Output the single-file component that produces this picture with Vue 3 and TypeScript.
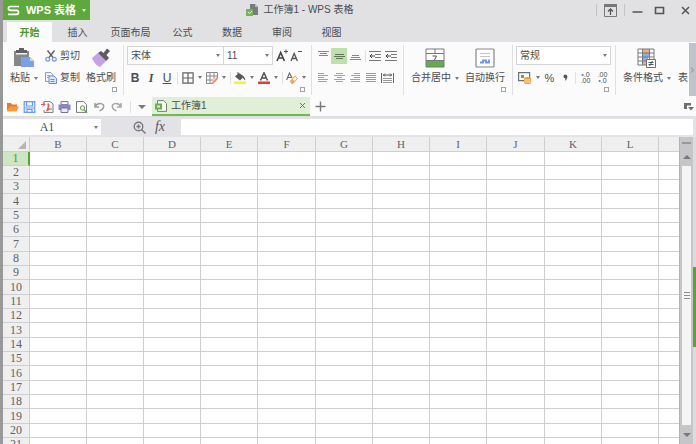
<script setup lang="ts">
import { ref } from 'vue'

const menus: string[] = ['开始', '插入', '页面布局', '公式', '数据', '审阅', '视图']
const activeMenu = ref('开始')
const columns: string[] = ['B', 'C', 'D', 'E', 'F', 'G', 'H', 'I', 'J', 'K', 'L', '']
const rows: number[] = Array.from({ length: 21 }, (_, i) => i + 1)
const activeRow = ref(1)
const cellName = ref('A1')
const formula = ref('')
</script>

<template>
  <div class="app">
    <header class="titlebar">
      <button class="brand" type="button">
        <svg width="13" height="11" viewBox="0 0 13 11"><path d="M12 1.5H3.6C.7 1.5.7 5.3 3.6 5.3H9.4C12.3 5.3 12.3 9.4 9.4 9.4H1" fill="none" stroke="#fff" stroke-width="1.7" /></svg>
        <span>WPS 表格</span>
        <i class="caret light"></i>
      </button>
      <h1 class="title">
        <svg width="12" height="12" viewBox="0 0 12 12"><path d="M4 0h5l3 3v8H4z" fill="#777b80" /><path d="M9 0v3h3" fill="#b8bcc0" /><path d="M0 5h7v7H0z" fill="#73b65a" /><path d="M2 8l1.5 1.7L6 7" fill="none" stroke="#e8f5e0" /></svg>
        <span>工作簿1 - WPS 表格</span>
      </h1>
      <div class="controls">
        <i class="bar"></i>
        <button type="button" aria-label="功能区"><svg width="13" height="13" viewBox="0 0 13 13"><path d="M.5.5h12v12H.5z" fill="none" stroke="#777" /><path d="M0 0h13v3H0z" fill="#777" /><path d="M6.5 11V5M4 7.5L6.5 5 9 7.5" fill="none" stroke="#555" stroke-width="1.3" /></svg></button>
        <i class="bar"></i>
        <button type="button" aria-label="最小化"><svg width="11" height="11" viewBox="0 0 11 11"><path d="M.5 7h10" stroke="#555" stroke-width="1.5" /></svg></button>
        <button type="button" aria-label="最大化"><svg width="11" height="11" viewBox="0 0 11 11"><path d="M1.5 2.5h8v6h-8z" fill="none" stroke="#555" stroke-width="1.6" /></svg></button>
        <button type="button" aria-label="关闭"><svg width="11" height="11" viewBox="0 0 11 11"><path d="M2 2l7 7M9 2L2 9" stroke="#555" stroke-width="1.5" /></svg></button>
      </div>
    </header>

    <nav class="menus">
      <button v-for="m in menus" :key="m" type="button" :class="{ active: m === activeMenu }" @click="activeMenu = m">{{ m }}</button>
    </nav>

    <section class="ribbon">
      <div class="group clipboard">
        <button class="big" type="button">
          <svg width="20" height="20" viewBox="0 0 20 20"><path d="M0 3h15v15H0z" fill="#85878a" /><path d="M5 0h5v2h3v3H2V2h3z" fill="#5e6063" /><path d="M2 5h11v1.500H2z" fill="#f2f2f2" /><path d="M7 9h9l4 4v6H7z" fill="#7ba0e4" /><path d="M16 9v4h4" fill="#c3d6f8" /></svg>
          <span>粘贴<i class="caret"></i></span>
        </button>
        <div class="pair">
          <button type="button">
            <svg width="12" height="12" viewBox="0 0 12 12"><path d="M2.5.5L8.4 8M9.5.5L3.6 8" stroke="#606468" stroke-width="1.4" /><g fill="none" stroke="#7098dc" stroke-width="1.2"><circle cx="2.7" cy="9.3" r="1.9" /><circle cx="9.3" cy="9.3" r="1.9" /></g></svg>剪切
          </button>
          <button type="button">
            <svg width="12" height="12" viewBox="0 0 12 12"><path d="M.6.6h5.2l2 2v6.8H.6z" fill="#fff" stroke="#7d96bd" /><path d="M2 3.5h3M2 5.5h3" stroke="#8ea6cc" /><path d="M4 4h5l2.5 2.5v5H4z" fill="#dce8fc" stroke="#668fd8" /><path d="M5.5 7.5h4M5.5 9.5h4" stroke="#668fd8" /></svg>复制
          </button>
        </div>
        <button class="big" type="button">
          <svg width="20" height="20" viewBox="0 0 20 20"><path d="M1 10l6-5 8 8-6 6c-3-1-6-4-8-9z" fill="#c4a2e8" /><path d="M7 5l3-2 2.500 2L16 .5 19 3l-3.500 4L18 10l-3 3z" fill="#5d5d61" /></svg>
          <span>格式刷</span>
        </button>
        <i class="launcher"></i>
      </div>

      <div class="group font">
        <div class="line selects">
          <label class="pick"><select aria-label="字体"><option>宋体</option></select><i class="caret"></i></label>
          <label class="pick"><select aria-label="字号"><option>11</option></select><i class="caret"></i></label>
          <button type="button" aria-label="增大字号"><svg width="12" height="14" viewBox="0 0 12 14"><path d="M1 12L4.700 3.500 8.400 12M2.400 9h4.600" fill="none" stroke="#444" stroke-width="1.6" /><path d="M8 2.500h4M10 .5v4" stroke="#555" /></svg></button>
          <button type="button" aria-label="减小字号"><svg width="12" height="14" viewBox="0 0 12 14"><path d="M1 12L4.200 4.500 7.400 12M2.300 9.500h3.800" fill="none" stroke="#555" stroke-width="1.3" /><path d="M8 2.500h4" stroke="#555" /></svg></button>
        </div>
        <div class="line tools">
          <button type="button" class="glyph bold">B</button>
          <button type="button" class="glyph italic">I</button>
          <button type="button" class="glyph under">U</button>
          <i class="rule"></i>
          <button type="button" class="split" aria-label="边框"><svg width="12" height="12" viewBox="0 0 12 12"><path d="M.9.9h10.200v10.200H.9zM6 1v10M1 6h10" fill="none" stroke="#606366" stroke-width="1.200" /></svg><i class="caret"></i></button>
          <button type="button" class="split" aria-label="绘图边框"><svg width="12" height="12" viewBox="0 0 12 12"><path d="M.5.5h11M.5.5v11h6M4 .5v11M8 .5V7M.5 4h11M.5 8h7M11.500.5V6" fill="none" stroke="#8a8a8e" /><path d="M5 11.500L11 5l1 2-5 5z" fill="#ed8c66" /></svg><i class="caret"></i></button>
          <i class="rule"></i>
          <button type="button" class="split" aria-label="填充颜色"><svg width="12" height="12" viewBox="0 0 12 12"><path d="M1 4.500L5 1l5 3.500L6 8.500z" fill="#55595c" /><path d="M9 4.500c2 1 2.500 2 2 4L9 6z" fill="#55595c" /><path d="M4 0v4" stroke="#55595c" /><path d="M0 9.500h12V12H0z" fill="#fbf12b" /></svg><i class="caret"></i></button>
          <button type="button" class="split" aria-label="字体颜色"><svg width="12" height="12" viewBox="0 0 12 12"><path d="M2.500 8.500L6 .8l3.500 7.700M3.700 6h4.600" fill="none" stroke="#505458" stroke-width="1.500" /><path d="M0 9.500h12V12H0z" fill="#e23c3c" /></svg><i class="caret"></i></button>
          <i class="rule"></i>
          <button type="button" class="split" aria-label="清除"><svg width="12" height="12" viewBox="0 0 12 12"><path d="M.6 8L3.500 1l2.600 5M1.500 5.500h3.500" fill="none" stroke="#6b6f73" stroke-width="1.200" /><path d="M4.500 9L9 4l2.500 2.500L7 11.300H5.500z" fill="#fff1dd" stroke="#e9a357" /><path d="M4.500 9l2-2 2.500 2.500-2 2H5.500z" fill="#eda95e" /></svg><i class="caret"></i></button>
        </div>
        <i class="launcher"></i>
      </div>

      <div class="group align">
        <div class="line">
          <button type="button" aria-label="顶端对齐"><svg width="11" height="12" viewBox="0 0 11 12"><path d="M0 1.500h11M2 3.500h7M1 5.500h9" stroke="#85878a" /></svg></button>
          <button type="button" class="on" aria-label="垂直居中"><svg width="11" height="12" viewBox="0 0 11 12"><path d="M1 4.500h9M0 6.500h11M2 8.500h7" stroke="#5f7659" /></svg></button>
          <button type="button" aria-label="底端对齐"><svg width="11" height="12" viewBox="0 0 11 12"><path d="M2 5.500h7M1 7.500h9M0 9.500h11" stroke="#85878a" /></svg></button>
          <i class="rule"></i>
          <button type="button" aria-label="减少缩进"><svg width="12" height="12" viewBox="0 0 12 12"><path d="M0 1.500h12M6 4.500h6M6 7.500h6M0 10.500h12" stroke="#777a7d" /><path d="M1 6h5M3 4L1 6l2 2" fill="none" stroke="#444" /></svg></button>
          <button type="button" aria-label="增加缩进"><svg width="12" height="12" viewBox="0 0 12 12"><path d="M0 1.500h12M6 4.500h6M6 7.500h6M0 10.500h12" stroke="#777a7d" /><path d="M1 6h5M3 4L1 6l2 2" fill="none" stroke="#444" /></svg></button>
        </div>
        <div class="line">
          <button type="button" aria-label="左对齐"><svg width="11" height="12" viewBox="0 0 11 12"><path d="M0 1.500h6M0 3.500h10M0 5.500h6M0 7.500h10M0 9.500h9" stroke="#a0a2a5" /></svg></button>
          <button type="button" aria-label="水平居中"><svg width="11" height="12" viewBox="0 0 11 12"><path d="M2 1.500h7M0 3.500h11M3 5.500h5M0 7.500h11M2 9.500h7" stroke="#a0a2a5" /></svg></button>
          <button type="button" aria-label="右对齐"><svg width="11" height="12" viewBox="0 0 11 12"><path d="M4 1.500h6M1 3.500h9M4 5.500h6M0 7.500h10M1 9.500h9" stroke="#a0a2a5" /></svg></button>
          <button type="button" aria-label="两端对齐"><svg width="11" height="12" viewBox="0 0 11 12"><path d="M0 1.500h10M0 3.500h10M0 5.500h10M0 7.500h10M0 9.500h10" stroke="#98999c" /></svg></button>
          <button type="button" aria-label="分散对齐"><svg width="13" height="12" viewBox="0 0 13 12"><path d="M.5 1v10M12.500 1v10" stroke="#666" /><path d="M2 6.500h9M2 8.500h9M2 10.500h9" stroke="#999" /><path d="M2 3h9M4 1.500L2.500 3 4 4.500M9 1.500L10.500 3 9 4.500" fill="none" stroke="#555" /></svg></button>
        </div>
      </div>

      <div class="group merge">
        <button class="big" type="button">
          <svg width="20" height="20" viewBox="0 0 20 20"><path d="M1 1h18v12H1z" fill="#fff" /><path d="M1 12.500h18V19H1z" fill="#62ad48" /><path d="M1 1h18v18H1zM1 5.500h18M10 1v5M1 12.500h18" fill="none" stroke="#77797c" /><path d="M7.500 8h4l-2 4" fill="none" stroke="#555" /></svg>
          <span>合并居中<i class="caret"></i></span>
        </button>
        <button class="big" type="button">
          <svg width="20" height="20" viewBox="0 0 20 20"><rect x="1" y="1" width="18" height="18" rx="1" fill="#fdfdfd" stroke="#85878a" stroke-width="1.200" /><path d="M5 5.500h10M5 8.500h10" stroke="#c3c5c8" /><path d="M5 14.500h3v-2h3v2h3v-3" fill="none" stroke="#6795e6" stroke-width="1.800" /></svg>
          <span>自动换行</span>
        </button>
        <i class="launcher"></i>
      </div>

      <div class="group number">
        <div class="line">
          <label class="pick"><select aria-label="数字格式"><option>常规</option></select><i class="caret"></i></label>
        </div>
        <div class="line tools">
          <button type="button" class="split" aria-label="货币"><svg width="14" height="12" viewBox="0 0 14 12"><path d="M.6.6h11v8H.6z" fill="#fff" stroke="#6d7073" stroke-width="1.200" /><path d="M3 3h3v3H3z" fill="#888" /><path d="M6 6.500c0-2 7-2 7 0v4c0 2-7 2-7 0z" fill="#efa041" /><path d="M6.500 8h6M6.500 10h6" stroke="#fbe0b5" /></svg><i class="caret"></i></button>
          <button type="button" class="percent">%</button>
          <button type="button" class="percent comma" aria-label="千位分隔"><svg width="5" height="8" viewBox="0 0 5 8"><circle cx="2.400" cy="2.400" r="1.900" fill="#55585b" /><path d="M4.200 2c.3 2-.6 4-2.400 5 .5-1 .7-2 .6-3z" fill="#55585b" /></svg></button>
          <i class="rule"></i>
          <button type="button" class="decimal"><span><b>•</b>.0</span><span>.00</span></button>
          <button type="button" class="decimal"><span>.00</span><span><b>•</b>.0</span></button>
        </div>
        <i class="launcher"></i>
      </div>

      <div class="group styles">
        <button class="big" type="button">
          <svg width="20" height="20" viewBox="0 0 20 20"><path d="M1 1h16v16H1z" fill="#fff" /><path d="M6 1h6v4H6zM6 13h5v4H6z" fill="#f0ad78" /><path d="M5 5h8v4H5zM6 9h5v4H6z" fill="#8cacf0" /><path d="M1 1h16v16H1zM5.500 1v16M12.500 1v16M1 5h16M1 9h16M1 13h16" fill="none" stroke="#77797c" /><path d="M9.500 11.500h9v8h-9z" fill="#fff" stroke="#6d6f72" /><path d="M11.500 14.500h5M11.500 16.500h5M15.500 13l-3 5" stroke="#555" /></svg>
          <span>条件格式<i class="caret"></i></span>
        </button>
        <button class="cut" type="button">表</button>
      </div>
      <button class="more" type="button" aria-label="更多"><svg width="5" height="6" viewBox="0 0 5 6"><path d="M1 .5L3.500 3 1 5.500" fill="none" stroke="#858a91" /></svg></button>
    </section>

    <div class="quick">
      <div class="actions">
        <button type="button" aria-label="打开"><svg width="13" height="12" viewBox="0 0 13 12"><path d="M1 10V2h4l1 1.500h5V6H4z" fill="#e87b20" /><path d="M3.500 5.500H13L10.500 10.500H1z" fill="#f79a3e" /></svg></button>
        <button type="button" aria-label="保存"><svg width="13" height="12" viewBox="0 0 13 12"><path d="M1.200.7h10.600v10.600H1.200z" fill="#eef4ff" stroke="#6a9be8" stroke-width="1.200" /><path d="M3.500 1v4h6V1M1.500 7h10M4 11V8.500h5V11" fill="none" stroke="#6a9be8" stroke-width="1.200" /></svg></button>
        <button type="button" aria-label="输出PDF"><svg width="13" height="12" viewBox="0 0 13 12"><path d="M3 3V.6h6L12 3v8.400H3V9" fill="#fff" stroke="#77797c" /><path d="M5.500 10c1-2 2-5 1.500-6.500s2 0 .5 2.500 2 2 3 2-2-.5-5 2" fill="none" stroke="#dc5b59" stroke-width="1.100" /><path d="M0 3.500h4M2 1.500l2 2-2 2" fill="none" stroke="#dc5b59" /></svg></button>
        <button type="button" aria-label="打印"><svg width="13" height="12" viewBox="0 0 13 12"><path d="M3 .6h7v3H3z" fill="#fff" stroke="#77748c" /><path d="M.5 3.500h12v5.500H.5z" fill="#8886c8" /><path d="M3 7h7v4.500H3z" fill="#e8e6fa" stroke="#77748c" /></svg></button>
        <button type="button" aria-label="打印预览"><svg width="13" height="12" viewBox="0 0 13 12"><path d="M1.500.6h7l3 3v7.800h-10z" fill="#fff" stroke="#77797c" /><circle cx="7.500" cy="7" r="2.200" fill="#e5f2df" stroke="#66a052" /><path d="M9 8.800l3 3" stroke="#66a052" stroke-width="1.400" /></svg></button>
        <button type="button" aria-label="撤销"><svg width="13" height="12" viewBox="0 0 13 12"><path d="M2 5.500C5 1 12 2 10.500 6.500 10 8.500 8 9 6.500 10M2 2v4h4" fill="none" stroke="#9b9da0" stroke-width="1.500" /></svg></button>
        <button type="button" aria-label="恢复"><svg width="13" height="12" viewBox="0 0 13 12"><path d="M11 5.500C8 1 1 2 2.500 6.500 3 8.500 5 9 6.500 10M11 2v4H7" fill="none" stroke="#a4a6a9" stroke-width="1.500" /></svg></button>
      </div>
      <button class="custom" type="button" aria-label="自定义"><i class="caret wide"></i></button>
      <div class="doc">
        <svg width="12" height="12" viewBox="0 0 12 12"><path d="M2.500.6h6l3 3v7.800h-9z" fill="#f5faf2" stroke="#73806e" /><path d="M0 3.500h7v6H0z" fill="#67b04c" /><path d="M2 5.500h3v2H2z" fill="#d9efcf" /></svg>
        <span>工作簿1</span>
        <button type="button" aria-label="关闭标签"><svg width="7" height="7" viewBox="0 0 7 7"><path d="M1 1l5 5M6 1L1 6" stroke="#6c756a" /></svg></button>
      </div>
      <button class="plus" type="button" aria-label="新建"><svg width="11" height="11" viewBox="0 0 11 11"><path d="M5.500.5v10M.5 5.500h10" stroke="#77797c" stroke-width="1.400" /></svg></button>
      <button class="layout" type="button" aria-label="标签列表"><svg width="10" height="9" viewBox="0 0 10 9"><path d="M0 1h7v2.500H3V7H0z" fill="#6c6e71" /><path d="M4 5h6L7 8.500z" fill="#6c6e71" /></svg></button>
    </div>

    <div class="formula">
      <label class="name"><input v-model="cellName" aria-label="名称框" /><i class="caret"></i></label>
      <button type="button" aria-label="浏览公式结果"><svg width="13" height="13" viewBox="0 0 13 13"><circle cx="5.500" cy="5.500" r="4.300" fill="none" stroke="#77797c" stroke-width="1.400" /><path d="M3.500 5.500h4M5.500 3.500v4M8.500 8.500l4 4" stroke="#77797c" stroke-width="1.500" /></svg></button>
      <button type="button" class="fx">fx</button>
      <input v-model="formula" class="entry" aria-label="编辑栏" />
    </div>

    <main class="body">
      <div class="sheet">
        <table>
          <colgroup><col class="head" /><col v-for="(c, i) in columns" :key="i" :class="c ? 'cell' : 'rest'" /></colgroup>
          <thead>
            <tr>
              <th class="corner"><svg width="8" height="8" viewBox="0 0 8 8"><path d="M8 0v8H0z" fill="#b6b6b8" /></svg></th>
              <th v-for="(c, i) in columns" :key="i" scope="col">{{ c }}</th>
            </tr>
          </thead>
          <tbody>
            <tr v-for="r in rows" :key="r" @click="activeRow = r">
              <th scope="row" :class="{ current: r === activeRow }">{{ r }}</th>
              <td v-for="(c, i) in columns" :key="i"></td>
            </tr>
          </tbody>
        </table>
      </div>
      <div class="scroll">
        <i class="handle"></i>
        <button type="button" aria-label="向上"><i class="caret wide up"></i></button>
        <div class="thumb"><i></i><i></i><i></i></div>
        <button type="button" aria-label="向下"><i class="caret wide"></i></button>
      </div>
      <div class="side"></div>
    </main>
    <button class="panel" type="button" aria-label="任务窗格"></button>
  </div>
</template>

<style>
html, body, #app { height: 100%; }
body { margin: 0; overflow: hidden; }
</style>

<style scoped>
* { box-sizing: border-box; }
.app {
  position: relative; display: flex; flex-direction: column; height: 100%; overflow: hidden;
  border-left: 3px solid #989898; background: #e1e1e3; color: #4b4d50;
  font: 10px/14px "Liberation Sans", "Noto Sans CJK SC", sans-serif;
}
button, input, select { font: inherit; color: inherit; border: 0; padding: 0; margin: 0; background: none; }
button { display: flex; align-items: center; justify-content: center; white-space: nowrap; }
svg { display: block; flex: none; }
.caret { flex: none; border: 2px solid transparent; border-top: 3px solid #77797c; border-bottom: 0; width: 0; height: 0; }
.caret.light { border-top-color: #e6f5dd; }
.caret.wide { border-width: 4px 4px 0; }
.caret.up { border-top: 0; border-bottom: 4px solid #77797c; }

.titlebar { display: flex; height: 20px; flex: none; }
.brand { width: 87px; background: #5ea83c; color: #fff; font-weight: bold; font-size: 11px; line-height: 18px; justify-content: space-between; padding: 0 4px; }
.title { flex: 1; display: flex; align-items: center; justify-content: center; gap: 5px; margin: 0; padding-right: 86px; font-size: 10px; font-weight: normal; line-height: 18px; }
.controls { display: flex; align-items: center; gap: 7px; padding-right: 5px; }
.controls .bar { width: 1px; height: 12px; background: #c4c4c7; }
.controls button { height: 18px; }
.controls button:nth-of-type(n + 3) { margin-left: 4px; }
.controls button:last-child { margin-left: 8px; }

.menus { display: grid; grid-template-columns: 45px 51px 55px 49px 50px 50px 49px; height: 22px; padding: 2px 4px 0; flex: none; }
.menus button { padding-top: 2px; }
.menus .active { background: #fbfbfb; color: #4c9a2c; font-weight: bold; }

.ribbon { display: flex; height: 55px; flex: none; background: #fbfbfb; padding-top: 3px; overflow: hidden; }
.group { position: relative; flex: none; height: 50px; border-right: 1px solid #e0e0e2; }
.launcher { position: absolute; right: 6px; bottom: 3px; width: 5px; height: 5px; border: 1px solid #a3a5a8; }
.line { display: flex; align-items: center; height: 21px; }
.big { flex-direction: column; justify-content: flex-start; gap: 3px; height: 42px; padding-top: 3px; }
.big span { display: flex; align-items: center; gap: 4px; }

.clipboard { display: grid; grid-template-columns: 28px 34px 30px; gap: 7px; width: 121px; padding-left: 7px; }
.pair button { height: 21px; gap: 3px; }
.pair button + button { margin-top: 1px; }

.font { width: 188px; padding-left: 3px; }
.pick { position: relative; display: flex; align-items: center; height: 19px; border: 1px solid #d5d5d8; background: #fff; }
.pick select { appearance: none; width: 100%; height: 17px; padding-left: 3px; outline: 0; }
.pick .caret { position: absolute; right: 3px; pointer-events: none; }
.pick + .pick { border-left: 0; }
.selects { display: grid; grid-template-columns: 97px 49px 12px 12px; column-gap: 0; }
.selects button { margin-left: 5px; }
.selects button:last-child { margin-left: 9px; }
.font .tools { display: grid; grid-template-columns: 16px 16px 16px 5px 24px 24px 4px 24px 24px 4px 24px; margin-top: 1px; }
.rule { width: 1px; height: 12px; background: #e0e0e2; margin: auto; }
.glyph { font-size: 12px; font-weight: bold; }
.italic { font-family: "Liberation Serif", serif; font-style: italic; }
.under { text-decoration: underline; font-weight: normal; }
.split { gap: 4px; }

.align { width: 92px; padding-left: 3px; }
.align .line { display: grid; grid-template-columns: 16px 16px 16px 16px 16px; }
.align .line:first-child { grid-template-columns: 16px 16px 16px 4px 16px 16px; }
.align .line + .line { margin-top: 1px; }
.align button { height: 16px; }
.align .on { background: #bfe0ad; }

.merge { display: grid; grid-template-columns: 48px 40px; gap: 6px; width: 109px; padding-left: 7px; }

.number { width: 103px; padding-left: 3px; }
.number .pick { width: 95px; }
.number .tools { display: grid; grid-template-columns: 25px 17px 15px 4px 17px 17px; margin-top: 1px; }
.percent { font-size: 11px; }
.decimal { flex-direction: column; font-size: 7px; line-height: 6px; }
.decimal b { color: #4f83e0; }

.styles { display: flex; flex: 1; min-width: 0; padding-left: 7px; border: 0; gap: 7px; overflow: hidden; }
.cut { align-self: flex-start; height: 20px; margin-top: 23px; }
.more { width: 7px; flex: none; background: #c0c4ca; margin-top: -2px; height: 53px; }

.quick { display: flex; align-items: center; height: 20px; flex: none; background: #fbfbfb; padding-right: 2px; border-bottom: 1px solid #dcdce0; }
.actions { display: flex; justify-content: space-between; width: 128px; padding: 0 7px 0 3px; border-right: 1px solid #e0e0e2; }
.custom { width: 21px; }
.doc { display: flex; align-items: center; gap: 4px; width: 158px; height: 19px; padding: 0 4px 0 3px; background: #e0efd5; border-bottom: 2px solid #72b857; }
.doc button { margin-left: auto; }
.plus { margin-left: 5px; }
.layout { margin-left: auto; }

.formula { display: flex; align-items: center; height: 20px; flex: none; padding-right: 3px; background: #e3e3e7; }
.name { display: flex; align-items: center; width: 98px; height: 16px; background: #fff; padding-right: 3px; }
.name input { flex: 1; min-width: 0; padding-right: 3px; text-align: center; font: 12px/16px "Liberation Serif", serif; outline: 0; }
.formula button { margin-left: 32px; }
.formula .fx { margin-left: 7px; width: 14px; font: italic 14px/16px "Liberation Serif", serif; color: #55575a; }
.entry { flex: 1; min-width: 0; height: 16px; margin-left: 14px; background: #fff; outline: 0; }

.body { display: flex; flex: 1; min-height: 0; }
.sheet { flex: 1; min-width: 0; overflow: hidden; background: #fff; }
table { width: 100%; table-layout: fixed; border-collapse: separate; border-spacing: 0; font: 12px/13px "Liberation Serif", "Noto Sans CJK SC", serif; color: #606265; }
.head { width: 27px; }
.cell { width: 57px; }
.cell:nth-child(4n + 6) { width: 58px; }
.rest { width: auto; }
th, td { padding: 0; height: 14px; border-right: 1px solid #cfcfd1; border-bottom: 1px solid #cfcfd1; }
th { font-weight: normal; background: #efeff0; }
thead th { height: 15px; font-size: 11px; }
tbody tr:nth-child(3n + 4) th, tbody tr:nth-child(3n + 4) td { height: 15px; }
th:last-child, td:last-child { border-right: 0; }
.corner svg { margin: 2px 3px 0 auto; }
.current { background: #cfe6c2; color: #4c9a2c; border-right: 2px solid #57a337; }

.scroll { display: flex; flex-direction: column; width: 14px; flex: none; background: #c6c6c8; padding: 0 2px; border-left: 1px solid #b4b4b7; }
.handle { height: 2px; margin: 5px 0 3px; background: #98989b; flex: none; }
.scroll button { height: 19px; flex: none; }
.thumb { flex: 1; display: flex; flex-direction: column; align-items: center; justify-content: center; gap: 2px; background: #f5f5f6; }
.thumb i { width: 6px; height: 1px; background: #8c8c90; }
.side { width: 3px; flex: none; background: #dcdcde; }
.panel { position: absolute; right: 0; top: 267px; width: 3px; height: 80px; background: #55a637; }
</style>
